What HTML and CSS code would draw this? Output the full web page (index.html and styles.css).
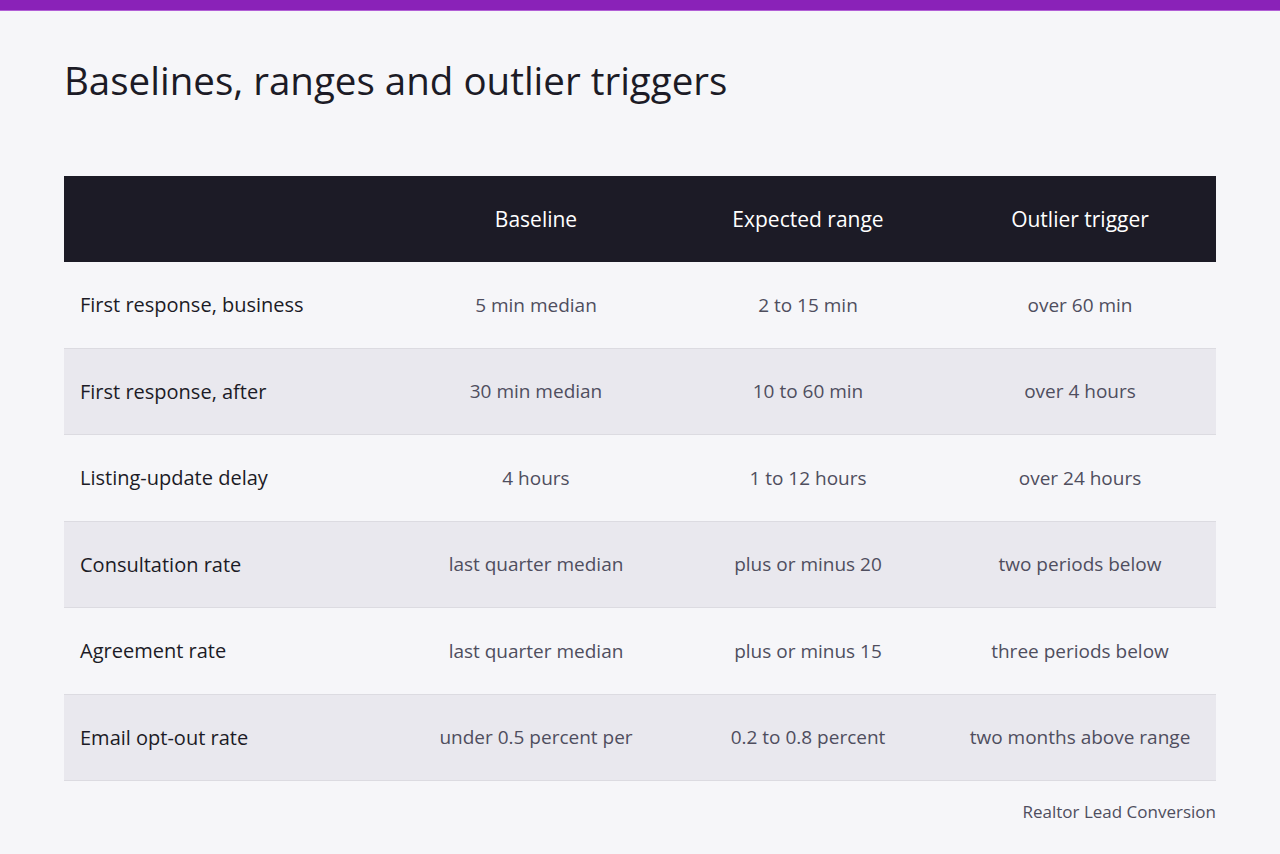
FILE: index.html
```html
<!DOCTYPE html>
<html>
<head>
<meta charset="utf-8">
<link rel="stylesheet" href="styles.css">
</head>
<body>
<div class="topbar"></div>
<main class="page">
  <h1 class="title">Baselines, ranges and outlier triggers</h1>
  <table class="grid">
    <thead>
      <tr><th class="label"></th><th>Baseline</th><th>Expected range</th><th>Outlier trigger</th></tr>
    </thead>
    <tbody>
      <tr><td class="label">First response, business</td><td>5 min median</td><td>2 to 15 min</td><td>over 60 min</td></tr>
      <tr><td class="label">First response, after</td><td>30 min median</td><td>10 to 60 min</td><td>over 4 hours</td></tr>
      <tr><td class="label">Listing-update delay</td><td>4 hours</td><td>1 to 12 hours</td><td>over 24 hours</td></tr>
      <tr><td class="label">Consultation rate</td><td>last quarter median</td><td>plus or minus 20</td><td>two periods below</td></tr>
      <tr><td class="label">Agreement rate</td><td>last quarter median</td><td>plus or minus 15</td><td>three periods below</td></tr>
      <tr><td class="label">Email opt-out rate</td><td>under 0.5 percent per</td><td>0.2 to 0.8 percent</td><td>two months above range</td></tr>
    </tbody>
  </table>
  <div class="source">Realtor Lead Conversion</div>
</main>
</body>
</html>
```
FILE: styles.css
```css
html, body {
  margin: 0;
  padding: 0;
  background: #f6f6f9;
  font-family: "Open Sans", Lato, sans-serif;
}
.topbar {
  height: 10px;
  background: #8a22b8;
  border-bottom: 1px solid #b25fd6;
}
.page {
  padding: 0 64px;
}
.title {
  margin: 0 0 71px;
  padding-top: 44px;
  font-size: 38.5px;
  font-weight: 400;
  color: #1c1b26;
  line-height: 50px;
}
.grid {
  width: 1152px;
  border-collapse: collapse;
  table-layout: fixed;
}
.grid th, .grid td {
  padding: 0 16px;
  text-align: center;
  font-weight: 400;
}
.grid th {
  height: 86px;
  background: #1c1b26;
  color: #ffffff;
  font-size: 21px;
}
.grid th.label { width: 304px; }
.grid td {
  height: 85.5px;
  font-size: 19px;
  color: #4f4e5e;
  border-bottom: 1px solid #dcdbe1;
}
.grid td.label {
  text-align: left;
  font-size: 20px;
  color: #1c1b26;
}
.grid tbody tr:nth-child(even) td {
  background: #e9e8ee;
}
.source {
  text-align: right;
  padding-top: 19px;
  font-size: 17px;
  color: #4f4e5e;
}
```
